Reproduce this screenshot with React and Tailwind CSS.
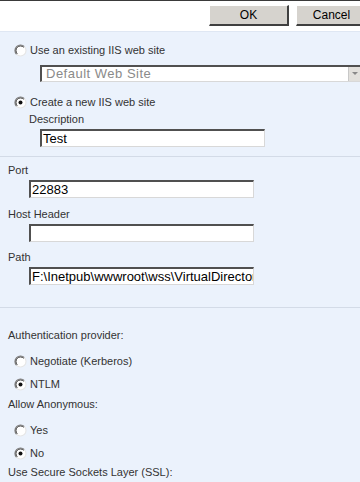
import React from "react";

const FONT = { fontFamily: '"Liberation Sans", Arial, sans-serif' };

function Radio({ checked }) {
  return (
    <svg width="13" height="13" viewBox="0 0 13 13" className="shrink-0">
      <circle cx="6.5" cy="6.5" r="5.5" fill="#fff" />
      <path d="M2.6 10.4 A5.5 5.5 0 0 1 10.4 2.6" fill="none" stroke="#7a7a7a" strokeWidth="1.2" />
      <path d="M3.3 9.7 A4.5 4.5 0 0 1 9.7 3.3" fill="none" stroke="#404040" strokeWidth="1" />
      <path d="M10.4 2.6 A5.5 5.5 0 0 1 2.6 10.4" fill="none" stroke="#e6e6e6" strokeWidth="1.2" />
      {checked && <circle cx="6.5" cy="6.5" r="2" fill="#111" />}
    </svg>
  );
}

function RadioRow({ checked, label, className }) {
  return (
    <div className={`flex items-center h-[18px] pl-[14px] gap-[3px] ${className}`}>
      <Radio checked={checked} />
      <span className="text-[11px] text-[#333]">{label}</span>
    </div>
  );
}

function Label({ children, className }) {
  return <div className={`h-4 flex items-center text-[11px] text-[#333] ${className}`}>{children}</div>;
}

function TextBox({ value, className }) {
  return (
    <div
      className={`h-[18px] bg-white border-t-2 border-l-2 border-r border-b border-t-[#505050] border-l-[#505050] border-r-[#d8d8d8] border-b-[#d8d8d8] flex items-center pl-[1px] overflow-hidden whitespace-nowrap text-[13px] text-black ${className}`}
    >
      {value}
    </div>
  );
}

function Button({ children, className }) {
  return (
    <div
      className={`h-[21px] bg-[#d6d3ce] border-t border-l border-t-white border-l-white border-r-2 border-b-2 border-r-[#404040] border-b-[#404040] flex items-center justify-center text-[12px] text-black shrink-0 ${className}`}
    >
      {children}
    </div>
  );
}

export default function App() {
  return (
    <div className="w-[360px] h-[482px] overflow-hidden bg-[#ebf2fc]" style={FONT}>
      {/* toolbar */}
      <div className="h-[32px] bg-white border-t border-[#3a3a3a] flex justify-end items-start pt-[4px] gap-[7px] border-b border-b-[#dfe7f3]">
        <Button className="w-[80px]">OK</Button>
        <Button className="w-[72px] -mr-[8px]">Cancel</Button>
      </div>

      {/* IIS web site */}
      <div className="pt-[9px]">
        <RadioRow label="Use an existing IIS web site" />
        <div className="ml-[40px] mt-[6px] h-[17px] bg-white border-t-2 border-l-2 border-[#505050] border-r-0 border-b border-b-[#d8d8d8] flex items-center">
          <span className="flex-1 pl-[4px] text-[13px] text-[#8a8a8a] tracking-[0.5px]">Default Web Site</span>
          <div className="w-[12px] h-full bg-[#e2e0dc] border-l border-[#c8c8c8] flex items-center justify-center">
            <svg width="6" height="4" viewBox="0 0 6 4">
              <path d="M0 0 L6 0 L3 3 Z" fill="#888" />
            </svg>
          </div>
        </div>
        <RadioRow checked label="Create a new IIS web site" className="mt-[11px]" />
        <Label className="pl-[29px]">Description</Label>
        <TextBox value="Test" className="ml-[40px] w-[225px] mt-[2px]" />
      </div>

      <div className="h-px bg-[#d3dbe7] mt-[9px]" />

      {/* port, host, path */}
      <div className="pl-[8px]">
        <Label className="mt-[5px]">Port</Label>
        <TextBox value="22883" className="ml-[21px] w-[225px] mt-[2px]" />
        <Label className="mt-[8px]">Host Header</Label>
        <TextBox value="" className="ml-[21px] w-[225px] mt-[2px]" />
        <Label className="mt-[7px]">Path</Label>
        <TextBox value={"F:\\Inetpub\\wwwroot\\wss\\VirtualDirectories\\22883"} className="ml-[21px] w-[225px] mt-[2px]" />
      </div>

      <div className="h-px bg-[#d3dbe7] mt-[22px]" />

      {/* security */}
      <div>
        <Label className="pl-[8px] mt-[19px]">Authentication provider:</Label>
        <RadioRow label="Negotiate (Kerberos)" className="mt-[9px]" />
        <RadioRow checked label="NTLM" className="mt-[5px]" />
        <Label className="pl-[8px] mt-[3px]">Allow Anonymous:</Label>
        <RadioRow label="Yes" className="mt-[9px]" />
        <RadioRow checked label="No" className="mt-[5px]" />
        <Label className="pl-[8px] mt-[2px]">Use Secure Sockets Layer (SSL):</Label>
      </div>
    </div>
  );
}
